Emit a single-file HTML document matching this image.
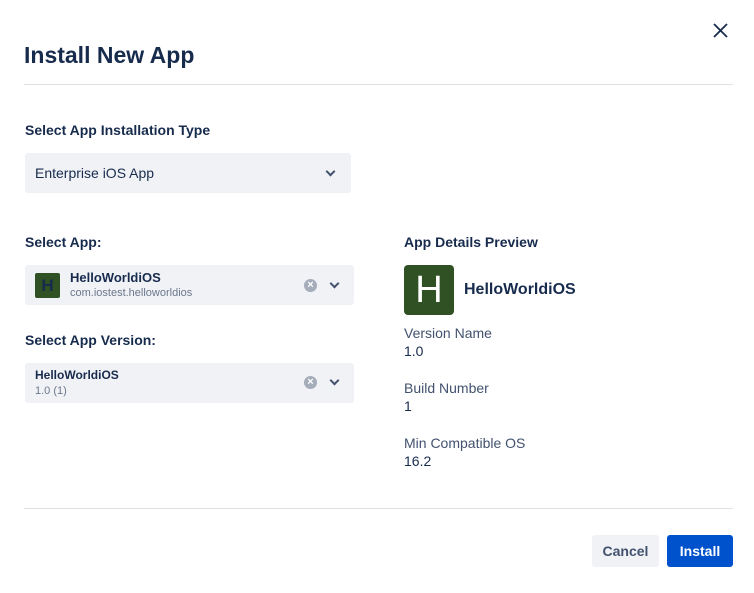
<!DOCTYPE html>
<html><head><style>
body{margin:0;width:754px;height:593px;background:#fff;font-family:"Liberation Sans",sans-serif;color:#172b4d;position:relative;overflow:hidden}
.a{position:absolute}
.lbl{font-size:14px;font-weight:bold;color:#172b4d}
.box{background:#f1f2f6;border-radius:3px}
.chev{width:5px;height:5px;border-right:2px solid #42526e;border-bottom:2px solid #42526e;transform:rotate(45deg)}
.clr{width:13px;height:13px;border-radius:50%;background:#a5adba;color:#fff;font-size:11px;line-height:13px;text-align:center;font-weight:bold}
.sm{font-size:14px;color:#42526e}
</style></head><body>
<div class="a" style="left:24px;top:42px;font-size:23px;font-weight:bold">Install New App</div>
<svg class="a" style="left:713px;top:23px" width="15" height="15"><path d="M1 1L14 14M14 1L1 14" stroke="#172b4d" stroke-width="1.8"/></svg>
<div class="a" style="left:24px;top:84px;width:709px;height:1px;background:#dfe1e6"></div>
<div class="a lbl" style="left:25px;top:122px">Select App Installation Type</div>
<div class="a box" style="left:25px;top:153px;width:326px;height:40px"></div>
<div class="a" style="left:35px;top:165px;font-size:14px">Enterprise iOS App</div>
<div class="a chev" style="left:327px;top:168px"></div>
<div class="a lbl" style="left:25px;top:234px">Select App:</div>
<div class="a box" style="left:25px;top:265px;width:329px;height:40px"></div>
<div class="a" style="left:35px;top:273px;width:25px;height:25px;background:#2f5124;color:#172b4d;font-weight:bold;font-size:17px;text-align:center;line-height:25px;border-radius:2px">H</div>
<div class="a" style="left:70px;top:270px;font-size:13px;font-weight:bold">HelloWorldiOS</div>
<div class="a" style="left:70px;top:287px;font-size:11px;color:#6b778c">com.iostest.helloworldios</div>
<div class="a clr" style="left:304px;top:279px">×</div>
<div class="a chev" style="left:331px;top:280px"></div>
<div class="a lbl" style="left:25px;top:332px">Select App Version:</div>
<div class="a box" style="left:25px;top:363px;width:329px;height:40px"></div>
<div class="a" style="left:35px;top:368px;font-size:12px;font-weight:bold">HelloWorldiOS</div>
<div class="a" style="left:35px;top:385px;font-size:11px;color:#6b778c">1.0 (1)</div>
<div class="a clr" style="left:304px;top:376px">×</div>
<div class="a chev" style="left:331px;top:377px"></div>
<div class="a lbl" style="left:404px;top:234px">App Details Preview</div>
<div class="a" style="left:404px;top:265px;width:50px;height:50px;background:#2f5124;color:#fff;font-size:38px;text-align:center;line-height:50px;border-radius:4px">H</div>
<div class="a" style="left:464px;top:281px;font-size:16px;font-weight:bold">HelloWorldiOS</div>
<div class="a sm" style="left:404px;top:325px">Version Name</div>
<div class="a" style="left:404px;top:343px;font-size:14px">1.0</div>
<div class="a sm" style="left:404px;top:380px">Build Number</div>
<div class="a" style="left:404px;top:398px;font-size:14px">1</div>
<div class="a sm" style="left:404px;top:435px">Min Compatible OS</div>
<div class="a" style="left:404px;top:453px;font-size:14px">16.2</div>
<div class="a" style="left:24px;top:508px;width:709px;height:1px;background:#dfe1e6"></div>
<div class="a" style="left:592px;top:535px;width:67px;height:32px;background:#f1f2f6;border-radius:3px;font-size:14px;font-weight:bold;color:#42526e;text-align:center;line-height:32px">Cancel</div>
<div class="a" style="left:667px;top:535px;width:66px;height:32px;background:#0052cc;border-radius:3px;font-size:14px;font-weight:bold;color:#fff;text-align:center;line-height:32px">Install</div>
</body></html>
